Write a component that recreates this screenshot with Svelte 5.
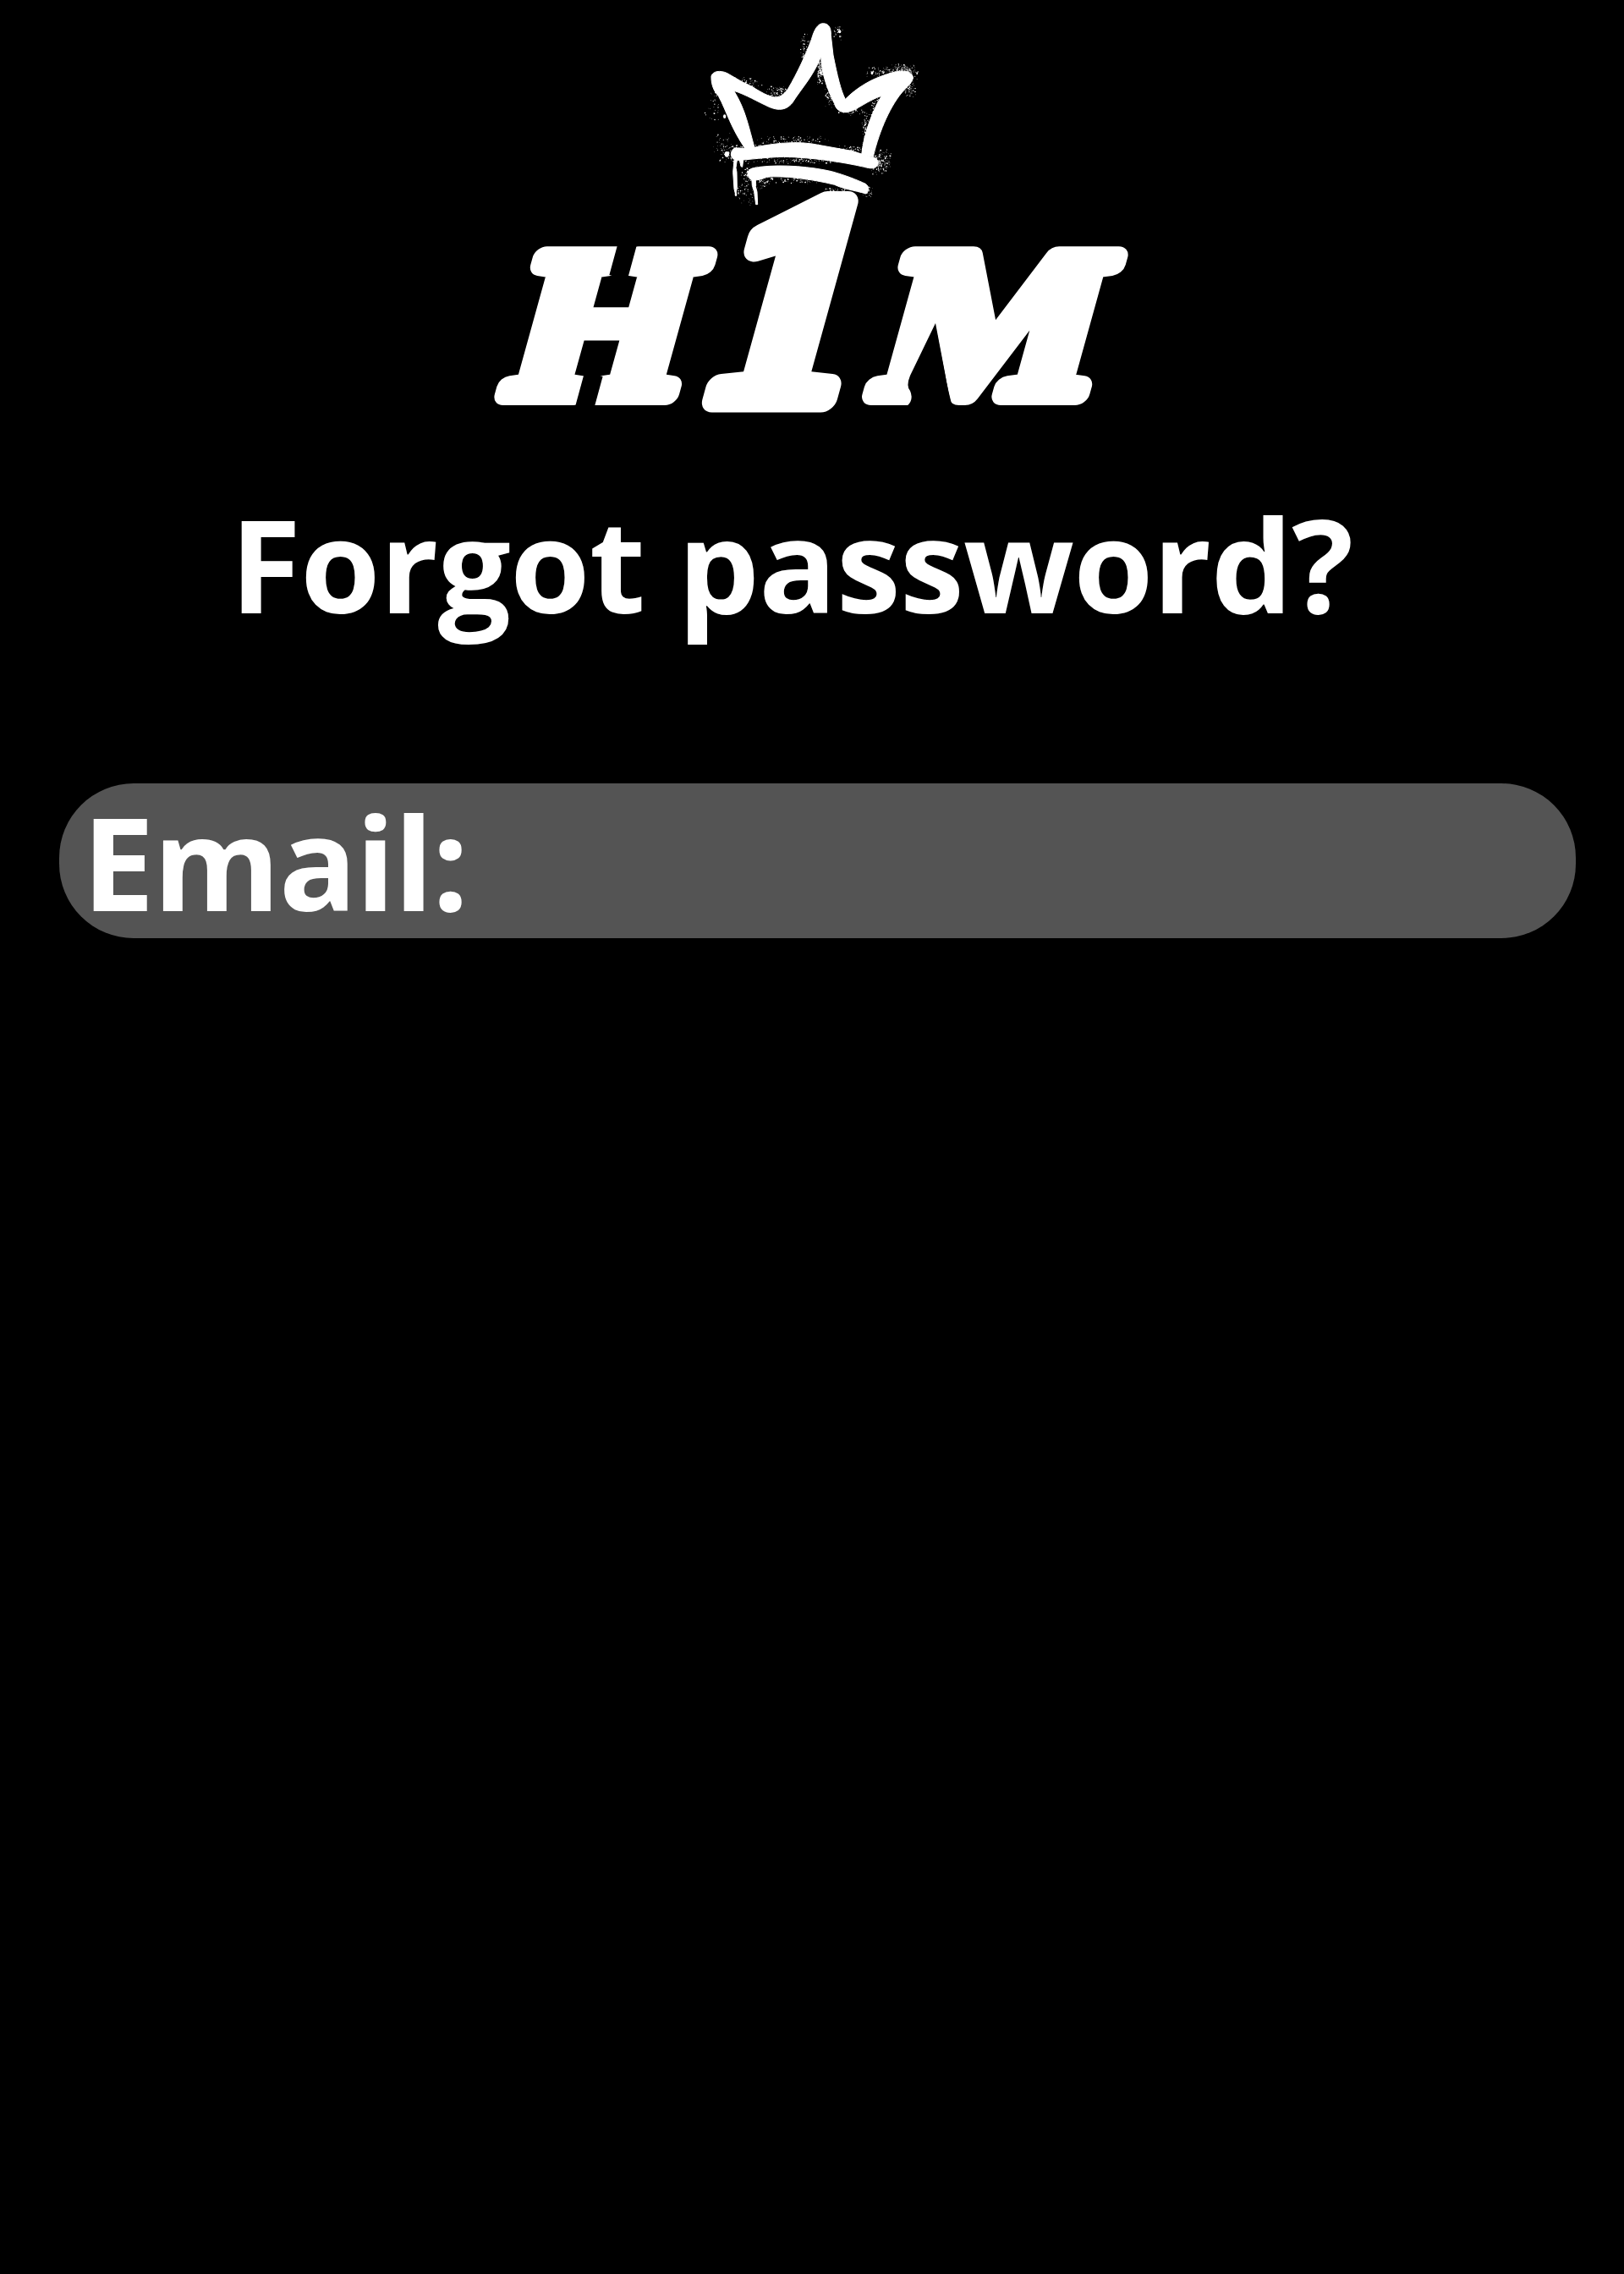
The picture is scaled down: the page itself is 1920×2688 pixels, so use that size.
<script>
  // Deterministic spray-paint speckles around the crown.
  let seed = 7;
  function rand() {
    seed = (seed * 16807) % 2147483647;
    return seed / 2147483647;
  }
  const clusters = [
    [180, 515, 42, 26, 150], [105, 340, 30, 60, 40], [130, 480, 25, 45, 35],
    [325, 300, 30, 18, 80], [215, 265, 45, 16, 70], [540, 80, 16, 26, 26],
    [425, 150, 12, 45, 60], [700, 225, 45, 16, 70], [775, 225, 38, 22, 260],
    [795, 280, 20, 26, 90], [480, 225, 10, 42, 150], [515, 310, 14, 34, 80],
    [640, 440, 10, 60, 120], [675, 360, 14, 34, 90], [590, 365, 36, 12, 60],
    [690, 545, 30, 34, 190], [600, 500, 50, 12, 80], [390, 467, 110, 12, 90],
    [400, 540, 120, 10, 140], [400, 608, 120, 10, 110], [235, 590, 26, 26, 150],
    [210, 650, 34, 36, 60], [270, 615, 26, 20, 60], [540, 648, 36, 10, 55],
    [645, 650, 14, 16, 50], [275, 490, 20, 12, 30]
  ];
  const specks = clusters.flatMap(([cx, cy, rx, ry, n]) =>
    Array.from({ length: n }, () => ({
      x: cx + (rand() + rand() - 1) * rx * 1.4,
      y: cy + (rand() + rand() - 1) * ry * 1.4,
      r: 0.8 + rand() * rand() * 2.2
    }))
  );
</script>

<main>
  <svg class="logo" viewBox="0 0 1920 560" role="img" aria-label="H1M">
    <g class="word">
      <text transform="translate(594 466) skewX(-15.5) scale(1.04 1)" font-size="247">H</text>
      <text transform="translate(1029 466) skewX(-15.5) scale(1.085 1)" font-size="247">M</text>
    </g>
    <!-- gaps between the serifs of the outer letters -->
    <path class="gap" d="M743 284L731 328M702 442L690 486" />
    <path class="cut" d="M1106 382L1076 444Q1071 456 1076 462Q1082 476 1066 484L1127 484Q1121 464 1117 440Z" />
    <g class="word one">
      <text transform="translate(818 472) skewX(-15.5)" font-size="349">1</text>
    </g>
    <g class="crown" transform="translate(810 10) scale(.33333)">
      <path d="M93 240C98 222 125 218 150 230L205 262C240 275 270 302 305 312C335 322 352 303 365 285C400 225 425 170 448 110C458 75 470 53 490 53C512 54 518 72 517 95L525 165C540 240 552 290 568 322C610 280 660 250 720 232C760 218 800 218 808 242C810 258 790 275 776 290C730 340 690 430 667 525L626 520C632 450 665 360 697 310C650 325 610 360 575 368C550 370 535 358 530 338C500 280 483 220 482 170C455 240 415 280 380 335C355 365 325 360 300 350C255 330 215 305 173 292C215 360 225 420 248 500L215 500C160 420 150 370 118 310C98 290 92 262 93 240Z" />
      <path d="M175 495L230 496C300 480 380 470 450 480L590 505L655 525C680 528 688 540 683 555C675 570 655 568 635 562C560 545 450 528 350 526C280 528 230 536 190 538C160 540 155 510 175 495Z" />
      <path d="M222 585C225 562 250 567 265 562C350 552 450 562 520 578C570 592 610 608 640 622C655 632 650 650 642 657C600 645 560 640 530 625C450 605 350 592 290 598C270 606 240 615 228 602Z" />
      <path d="M174 538L184 538L180 565L183 580L184 635L179 660L174 640L170 580ZM193 538H206L203 562L198 560ZM236 598L250 598L250 632L255 650L257 695L251 695L245 650L238 628Z" />
      <ellipse cx="148" cy="517" rx="8" ry="10" />
      <ellipse cx="140" cy="383" rx="5" ry="7" />
      <ellipse cx="180" cy="660" rx="4" ry="6" />
      <ellipse cx="663" cy="229" rx="4" ry="6" />
      <ellipse cx="548" cy="82" rx="5" ry="6" />
      {#each specks as s}
        <circle cx={s.x} cy={s.y} r={s.r} />
      {/each}
    </g>
  </svg>
  <h1>Forgot password?</h1>
  <label class="field">
    <span>Email:</span>
  </label>
</main>

<style>
  :global(body) {
    margin: 0;
    background: #000;
  }
  main {
    display: flex;
    flex-direction: column;
    box-sizing: border-box;
    width: 1920px;
    height: 2688px;
    overflow: hidden;
    background: #000;
    color: #fff;
    font-family: "Open Sans", "Noto Sans", sans-serif;
    font-weight: 670;
  }
  .logo {
    display: block;
    flex: none;
    width: 1920px;
    height: 560px;
    overflow: visible;
    fill: #fff;
  }
  .word {
    font-family: "Liberation Serif", serif;
    font-weight: 700;
    stroke: #fff;
    stroke-width: 26px;
    stroke-linejoin: round;
  }
  .one {
    stroke-width: 31px;
  }
  .gap {
    stroke: #000;
    stroke-width: 22px;
  }
  .cut {
    fill: #000;
  }
  .crown > path {
    stroke: #fff;
    stroke-width: 3px;
    stroke-linejoin: round;
  }
  h1 {
    margin: 6px 0 0 272px;
    font-size: 153px;
    font-weight: 670;
    letter-spacing: -0.9px;
    line-height: 200px;
    white-space: nowrap;
  }
  .field {
    display: flex;
    box-sizing: border-box;
    width: 1793px;
    height: 183px;
    margin: 160px 0 0 70px;
    padding-left: 27px;
    border-radius: 88px;
    background: #545454;
  }
  .field span {
    font-size: 153px;
    letter-spacing: -1.6px;
    line-height: 184px;
  }
</style>
